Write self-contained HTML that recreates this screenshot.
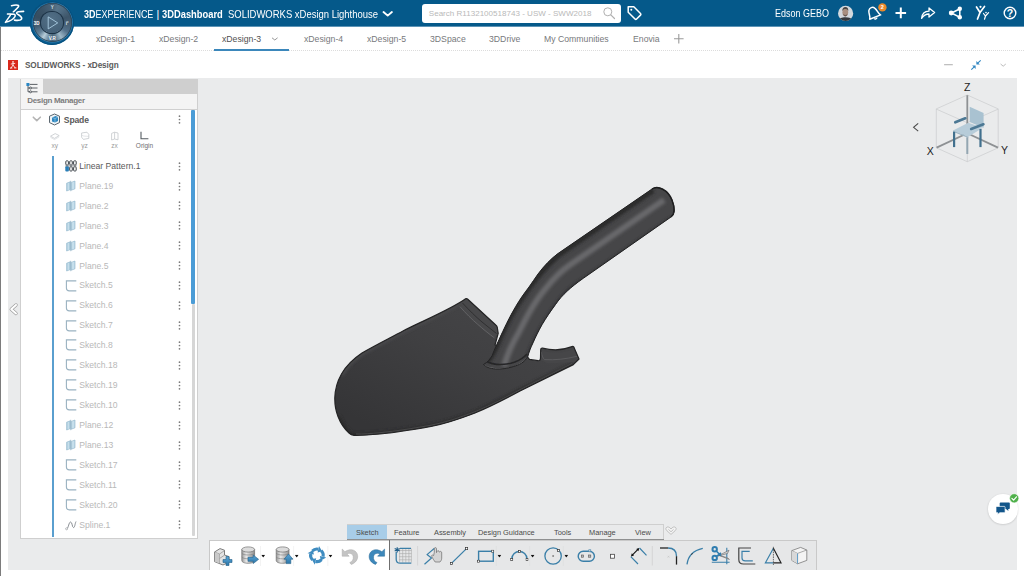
<!DOCTYPE html>
<html>
<head>
<meta charset="utf-8">
<title>3DEXPERIENCE | 3DDashboard</title>
<style>
*{box-sizing:border-box;margin:0;padding:0}
html,body{width:1024px;height:576px;overflow:hidden;background:#fff;font-family:"Liberation Sans",sans-serif;}
body{position:relative}
.abs{position:absolute}
#topbar{left:0;top:0;width:1024px;height:27px;background:#05598a;border-bottom:1px solid #5d94b6}
#leftedge{left:0;top:27px;width:1px;height:549px;background:#7c7c7c}
#brand{left:84px;top:5.500px;height:16px;line-height:16px;font-size:10.500px;color:#fff;white-space:nowrap}
#brand span{transform-origin:0 50%;display:inline-block}
#brand b{font-weight:bold}
#search{left:422px;top:4px;width:199px;height:19px;background:#fff;border-radius:3px}
#search span{position:absolute;left:6.800px;top:2.500px;font-size:8.050px;line-height:13px;color:#b9b9b9;white-space:nowrap}
#user{left:774.700px;top:6.500px;font-size:10.300px;line-height:14px;color:#fff;white-space:nowrap;transform-origin:0 50%;transform:scaleX(0.874)}
#tabs{left:0;top:27px;width:1024px;height:24px;background:#fff}
.tab{position:absolute;top:32.500px;font-size:8.700px;line-height:12px;color:#77797c;white-space:nowrap}
.tab.act{color:#505050}
#tabline{left:0;top:50px;width:1024px;height:0;border-top:1px dotted #dcdcdc}
#actline{left:213.700px;top:49px;width:75.700px;height:2px;background:#3b87bb}
#hdr{left:25px;top:59.500px;font-size:8.200px;line-height:12px;color:#5b5b5b;font-weight:bold;white-space:nowrap;letter-spacing:-0.1px}
#swico{left:7.5px;top:60px;width:10px;height:10px;background:#d9291c}
#canvas{left:7.500px;top:78px;width:1009.500px;height:491.500px;background:#eaebec}
#panel{left:20px;top:78.500px;width:178px;height:460.500px;background:#fff;border:1px solid #cfcfcf}
#ptabbar{left:21px;top:79px;width:176px;height:14.700px;background:#cfcfcf}
#ptab{left:21px;top:79px;width:22px;height:15px;background:#f4f4f4}
#phead{left:21px;top:93.500px;width:176px;height:16.500px;background:#f4f4f4;border-bottom:1px solid #d0d0d0}
#phead span{position:absolute;left:6.200px;top:1.500px;font-size:8px;line-height:12px;font-weight:bold;color:#7c7c7c;white-space:nowrap;letter-spacing:-0.300px}
.row{position:absolute;left:79.300px;font-size:8.600px;line-height:12px;color:#b8b8b8;white-space:nowrap}
.pl{position:absolute;top:141px;text-align:center;font-size:6.500px;line-height:10px;color:#9a9a9a;white-space:nowrap}
.row.dk{color:#5a5a5a}
.dots{position:absolute;left:178px;width:2px;height:9px}
.dots i{position:absolute;left:0;width:2px;height:2px;background:#8c8c8c;border-radius:1px}
.dots i:nth-child(1){top:0}.dots i:nth-child(2){top:3.5px}.dots i:nth-child(3){top:7px}
#scroll{left:191.300px;top:110px;width:4px;height:194px;background:#4b9cd6;border-radius:1px}
#scrolltrack{left:192px;top:304px;width:3px;height:232px;background:#d6d6d6;border-radius:1px}
#treeline{left:51.800px;top:156px;width:2px;height:381px;background:#5a9fcf}
#tbtabs{left:346.500px;top:524px;width:317px;height:16px;background:#e9eaeb;border:1px solid #cfcfcf;border-bottom:none}
#tbact{left:347px;top:525px;width:40px;height:14.500px;background:#a8cde8}
#tbline{left:347px;top:539px;width:316.500px;height:1px;background:#8f9091}
#tbsep{left:389px;top:540px;width:1px;height:29.500px;background:#6f6f6f}
.tt{position:absolute;top:527.500px;font-size:7.400px;line-height:10px;color:#4a4a4a;white-space:nowrap}
#toolbar{left:209px;top:539.500px;width:607.500px;height:30px;background:#e6e7e8;border:1px solid #c9c9c9;border-bottom:none}
#tbwhite{left:210px;top:540.500px;width:179px;height:29px;background:#fff}
</style>
</head>
<body>
<div id="topbar" class="abs"></div>
<div id="brand" class="abs"><span id="b1s" style="position:absolute;left:0;top:0;transform:scaleX(0.855)"><b>3D</b>EXPERIENCE</span><span id="b2s" style="position:absolute;left:72.500px;top:0">|</span><span id="b3s" style="position:absolute;left:78px;top:0;transform:scaleX(0.890)"><b>3DDashboard</b></span><span id="b4s" style="position:absolute;left:143.500px;top:0;transform:scaleX(0.902)">SOLIDWORKS xDesign Lighthouse</span></div>
<svg class="abs" style="left:381px;top:9px" width="14" height="10" viewBox="0 0 14 10"><path d="M2.500,3 L6.700,6.600 L10.900,3" fill="none" stroke="#fff" stroke-width="1.900" stroke-linecap="round" stroke-linejoin="round"/></svg>
<div id="search" class="abs"><span>Search R1132100518743 - USW - SWW2018</span></div>
<div id="user" class="abs">Edson GEBO</div>
<div id="tabs" class="abs"></div>
<!-- search magnifier -->
<svg class="abs" style="left:601px;top:5px" width="18" height="18" viewBox="0 0 18 18"><circle cx="6.800" cy="6.800" r="4" fill="none" stroke="#b0b0b0" stroke-width="1"/><path d="M9.800,9.800 L13.500,13.500" stroke="#b0b0b0" stroke-width="1.200" stroke-linecap="round"/></svg>
<!-- tag icon -->
<svg class="abs" style="left:626px;top:4px" width="18" height="18" viewBox="0 0 18 18"><path d="M2.200,2.800 L7.800,2.800 L14.500,9.500 C15,10 15,10.600 14.500,11.100 L10.600,15 C10.100,15.500 9.500,15.500 9,15 L2.200,8.200 Z" fill="none" stroke="#fff" stroke-width="1.500" stroke-linejoin="round"/><circle cx="5.300" cy="5.800" r="1" fill="#fff"/></svg>
<!-- avatar -->
<svg class="abs" style="left:837px;top:5px" width="18" height="17" viewBox="837 5 18 17"><defs><clipPath id="avc"><circle cx="845.600" cy="13.400" r="7.600"/></clipPath></defs>
<circle cx="845.600" cy="13.400" r="7.600" fill="#d3d9de"/>
<g clip-path="url(#avc)"><path d="M838,22 C838.500,18.200 841.500,17.200 845.400,17.200 C849.500,17.200 852.600,18.400 853.400,22 Z" fill="#34383d"/>
<ellipse cx="845.300" cy="12.300" rx="2.900" ry="3.900" fill="#a98f80"/>
<path d="M842.300,11.200 C842.200,8.200 843.600,7 845.400,7 C847.300,7 848.500,8.300 848.300,11 C847.600,9.400 846.600,9 845.300,9 C844,9 843,9.600 842.300,11.200 Z" fill="#4a4643"/>
<path d="M843.300,13.800 C844.500,15.400 846.300,15.400 847.400,13.800 C847.300,15.600 846.400,16.600 845.300,16.600 C844.300,16.600 843.400,15.600 843.300,13.800 Z" fill="#6a5a52"/></g></svg>
<!-- bell -->
<svg class="abs" style="left:864px;top:3px" width="24" height="20" viewBox="864 3 24 20"><g transform="rotate(-22 873 13)"><path d="M867.600,17.600 C869.600,15.600 868.400,11.600 870.200,9 C871.800,6.800 875,6.800 876.400,9 C878.200,11.600 877.200,15.600 879.400,17.600 Z" fill="none" stroke="#fff" stroke-width="1.500" stroke-linejoin="round"/><path d="M872,18.600 C872.600,19.800 874.400,19.800 875,18.600" fill="none" stroke="#fff" stroke-width="1.300"/></g><circle cx="882.400" cy="7.400" r="4.200" fill="#e9892b"/><text x="882.400" y="9.300" font-family="Liberation Sans,sans-serif" font-size="5.500" font-weight="bold" fill="#fff" text-anchor="middle">2</text></svg>
<!-- plus -->
<svg class="abs" style="left:894px;top:6px" width="14" height="14" viewBox="0 0 14 14"><path d="M6.800,1.600 V12.200 M1.500,6.900 H12.100" stroke="#fff" stroke-width="2" stroke-linecap="butt"/></svg>
<!-- share arrow -->
<svg class="abs" style="left:919px;top:5px" width="18" height="16" viewBox="919 5 18 16"><path d="M921.600,18.400 C922,14 924.500,11.300 929,11.200 L929,8 L934.600,12.600 L929,17 L929,14 C926,14 923.500,15.400 921.600,18.400 Z" fill="none" stroke="#fff" stroke-width="1.300" stroke-linejoin="round"/></svg>
<!-- network -->
<svg class="abs" style="left:946px;top:4px" width="20" height="18" viewBox="946 4 20 18"><path d="M951.500,13 L959.500,9 M951.500,13 L959.500,17.200 M959.800,9 L959.800,17.200" stroke="#fff" stroke-width="1.500" fill="none"/><circle cx="951.200" cy="13" r="2.400" fill="#fff"/><circle cx="959.800" cy="8.800" r="2.200" fill="#fff"/><circle cx="959.800" cy="17.300" r="2.200" fill="#fff"/></svg>
<!-- Y people -->
<svg class="abs" style="left:973px;top:4px" width="20" height="18" viewBox="973 4 20 18"><g stroke="#fff" fill="none" stroke-linecap="round"><path d="M976.500,7 L980,12.500 L984.500,6.500 M980,12.500 L977.500,19" stroke-width="1.700"/><path d="M983.500,13.500 L985.500,16 L988.600,12.600 M985.500,16 L984.500,19.200" stroke-width="1.200"/></g><circle cx="980.500" cy="6.800" r="1.100" fill="#fff"/><circle cx="986" cy="12.600" r="0.800" fill="#fff"/></svg>
<!-- help -->
<svg class="abs" style="left:1001px;top:4px" width="18" height="18" viewBox="1001 4 18 18"><circle cx="1010" cy="13" r="5.800" fill="none" stroke="#fff" stroke-width="1.400"/><text x="1010" y="16.700" font-family="Liberation Sans,sans-serif" font-size="10.500" font-weight="bold" fill="#fff" text-anchor="middle">?</text></svg>
<!-- tab chevron + plus -->
<svg class="abs" style="left:269px;top:35px" width="12" height="8" viewBox="0 0 12 8"><path d="M3,2.800 L5.800,5 L8.600,2.800" fill="none" stroke="#8b8b8b" stroke-width="0.900"/></svg>
<svg class="abs" style="left:672px;top:32px" width="14" height="14" viewBox="0 0 14 14"><path d="M6.800,2 V11.600 M2,6.800 H11.600" stroke="#9a9a9a" stroke-width="1.100"/></svg>
<!-- header right icons -->
<svg class="abs" style="left:940px;top:56px" width="70" height="18" viewBox="940 56 70 18"><path d="M944.100,64.700 H952.800" stroke="#b4b4b4" stroke-width="1.100"/><g fill="#2f86c2"><path d="M976.400,64.500 V61 L979.900,64.500 Z"/><path d="M975.600,65.500 V69 L972.100,65.500 Z"/></g><path d="M978,62.900 L980.700,60.300 M974,67.100 L971.300,69.700" stroke="#2f86c2" stroke-width="1.100"/><path d="M1000.600,64 L1003.200,66.200 L1005.800,64" fill="none" stroke="#b4b4b4" stroke-width="0.900"/></svg>


<div id="tabline" class="abs"></div>
<div id="actline" class="abs"></div>
<div class="tab" style="left:96px">xDesign-1</div>
<div class="tab" style="left:159px">xDesign-2</div>
<div class="tab act" style="left:222px">xDesign-3</div>
<div class="tab" style="left:304px">xDesign-4</div>
<div class="tab" style="left:367px">xDesign-5</div>
<div class="tab" style="left:430px">3DSpace</div>
<div class="tab" style="left:489px">3DDrive</div>
<div class="tab" style="left:544px">My Communities</div>
<div class="tab" style="left:633px">Enovia</div>
<div id="leftedge" class="abs"></div>
<!-- 3DS logo -->
<svg class="abs" style="left:3px;top:3px" width="24" height="22" viewBox="3 3 24 22">
<g fill="none" stroke="#fff" stroke-linecap="round" stroke-linejoin="round">
<path d="M11.500,5.700 C13.600,5.200 16,5 17.700,5.200 C18.800,5.400 19,6 18.400,6.800 C17.400,8.200 16.300,9.300 15.200,10.200 C14.600,10.800 13.900,11.400 13.300,11.800" stroke-width="1.500"/>
<path d="M7.500,14.100 C9.800,13.800 12.300,13.800 14,14.300 C15.300,14.700 15.500,15.600 14.900,16.600 C13.400,19.200 9.800,21.200 5.400,22.400 L10.300,15.400" stroke-width="1.500"/>
<path d="M23.600,11.400 C21.600,11.400 19.600,11.500 18.300,11.800 C16.900,12.200 16.300,12.700 16.700,13.400 C17.500,14.600 21.300,15.800 21.700,18 C21.900,19.300 20.500,20.100 18.700,20.300 C17.300,20.400 15.800,20.300 14.600,20.100" stroke-width="1.600"/>
</g></svg>
<!-- compass -->
<div class="abs" id="compass" style="left:30px;top:0.500px;width:44px;height:44px;border-radius:50%;background:#0a5c8f;box-shadow:inset 0 0 0 1px #05507e"></div>
<div class="abs" style="left:32.500px;top:2.800px;width:39.600px;height:39.600px;border-radius:50%;background:conic-gradient(from 0deg,#4a6378 0deg,#587489 18deg,#4e6a80 40deg,#3d5569 70deg,#465f74 95deg,#52708a 122deg,#9db7c7 150deg,#5d7b90 168deg,#4b677c 180deg,#6a889c 194deg,#b7cdd9 212deg,#66849a 230deg,#435d72 256deg,#364d60 290deg,#3a5266 320deg,#445d72 345deg,#4a6378 360deg);box-shadow:inset 0 0 0 0.800px #2b475c, 0 0 0 0.600px #3f86b4"></div>
<div class="abs" style="left:41.300px;top:11.800px;width:21.600px;height:21.600px;border-radius:50%;background:radial-gradient(circle at 45% 35%,#526f86,#435f76 85%);box-shadow:0 0 0 1.100px #1c3347"></div>
<svg class="abs" style="left:30px;top:0" width="44" height="45" viewBox="30 0 44 45">
<path d="M48.200,16.900 L48.200,28.900 L57.700,22.900 Z" fill="none" stroke="#a9cce2" stroke-width="0.900" stroke-linejoin="round"/>
<text x="36.600" y="25" font-family="Liberation Sans,sans-serif" font-size="4.500" font-weight="bold" fill="#fff" text-anchor="middle">3D</text>
<text x="52.300" y="9.300" font-family="Liberation Sans,sans-serif" font-size="4.500" font-weight="bold" fill="#d5e3ec" text-anchor="middle">Y</text>
<text x="67" y="24.500" font-family="Liberation Sans,sans-serif" font-size="4.500" font-weight="bold" fill="#e6eef3" text-anchor="middle">i²</text>
<text x="52.300" y="39.800" font-family="Liberation Sans,sans-serif" font-size="4.500" font-weight="bold" fill="#fff" text-anchor="middle">V.R</text>
</svg>

<div id="swico" class="abs"></div><svg class="abs" style="left:7.500px;top:60px" width="10" height="10" viewBox="0 0 10 10"><g stroke="#fff" stroke-width="0.800" fill="none" stroke-linecap="round"><path d="M5,2.200 L5,5.200 M3.200,4 L6.800,3.400 M5,5.200 L3,8 M5,5.200 L7.200,7.800 M2.400,8 H4 M6.400,7.900 H8"/></g><circle cx="5" cy="1.800" r="0.700" fill="#fff"/></svg>
<div id="hdr" class="abs">SOLIDWORKS - xDesign</div>
<div id="canvas" class="abs"></div>

<svg id="spade" class="abs" style="left:0;top:0" width="1024" height="576" viewBox="0 0 1024 576">
<defs>
<linearGradient id="bladeG" x1="470" y1="300" x2="400" y2="440" gradientUnits="userSpaceOnUse">
<stop offset="0" stop-color="#444446"/><stop offset="0.35" stop-color="#404042"/><stop offset="0.7" stop-color="#3a3a3c"/><stop offset="1" stop-color="#353537"/>
</linearGradient>
<filter id="b1" x="-20%" y="-20%" width="140%" height="140%"><feGaussianBlur stdDeviation="1.6"/></filter>
<filter id="b2" x="-20%" y="-20%" width="140%" height="140%"><feGaussianBlur stdDeviation="0.7"/></filter>
<clipPath id="handleClip"><path id="hp" d="M483.500,364.500 C488,362 490,359 492.200,355.600 C495,348 497,344 498.900,340 C501.500,334 504,329 506.700,323.300 C509.500,317.500 512.500,312 515.600,306.700 C519.500,300 524,293.500 529,287 C532,283 535,278 538,274 C544,266 551,258.500 558.300,253.300 L652,189 C658,185 668,190 672,200 C675,208 675,214 671,217 L583.300,278.300 C571,287 562,295 555.600,304.400 C550,312 546,318 542.200,324.400 C538.500,331 535.500,337 533.300,342.200 C530.500,348 529,352 527.800,356.500 C524,363 519,365 513.300,366.600 C507,368.500 501,369.300 495.600,369 C490,368.500 485.500,367 483.500,364.500 Z"/></clipPath>
<clipPath id="bladeClip"><path id="bp" d="M465.600,298.800 C450,310 420,322 403,331 C388,339 374,346 362,353 C353,359 346,366 341.500,374 C337.500,381 335,390 334.800,398 C334.700,405 336,411.500 338,416.500 C340.500,423 344.500,429 349,433 C350.500,434.500 352,435.200 354,435.300 C362,435.600 371,434.800 380,434 C396,432.500 414,429.500 431,426.500 C447,423.500 462,418 475,413 C492,406 505,399 520,391 L573.300,364.600 L579,359 L574,347.500 C573.800,346.400 573,346.300 572,346.600 C566,348.900 561,349.800 555.600,349.800 C551,349.800 547,349.300 542.500,348.200 C541.300,348 540.800,348.600 540.700,349.800 L540.500,358 C540.500,360 539.600,360.900 538,360.700 L529.500,359.400 L527,356.500 L495,345 L498.200,333.300 L497.300,327.500 C497.200,326.500 496.800,325.800 496,325.200 L467.500,299 C466.800,298.400 466.200,298.400 465.600,298.800 Z"/></clipPath>
</defs>
<!-- blade -->
<use href="#bp" fill="url(#bladeG)"/>
<g clip-path="url(#bladeClip)">
<path d="M465,300 C450,311 420,323 403,332 C388,340 374,347 362,354 C353,360 346,367 342,375" fill="none" stroke="#4c4c4e" stroke-width="3" filter="url(#b1)"/>
<path d="M338,416.500 C340.500,423 344.500,429 349,433 C350.500,434.500 352,435.200 354,435.300 C362,435.600 371,434.800 380,434 C396,432.500 414,429.500 431,426.500 C447,423.500 462,418 475,413 C492,406 505,399 520,391 L573,365" fill="none" stroke="#2a2a2c" stroke-width="5" filter="url(#b1)"/>

</g>
<!-- left flange face -->
<path d="M465.600,298.800 L460,306.700 C466,313.500 472,319.500 477.800,324.400 C483,329 489,334 494.400,337.800 L498.200,333.300 L497.300,327.500 L496,325.200 L467.500,299 Z" fill="#48484a"/>
<path d="M460,306.700 C466,313.500 472,319.500 477.800,324.400 C483,329 489,334 494.400,337.800" fill="none" stroke="#6a6a6c" stroke-width="0.800"/>
<path d="M462.500,303 C469,310 476,317 482,322 C487,326 492,330 496.500,333.500" fill="none" stroke="#2c2c2e" stroke-width="0.900"/>
<!-- right flange face -->
<path d="M540.700,350 C545,351.800 550,352.600 555.600,352.600 C562,352.600 568,351.500 574.500,349 L579,359 L575,362 L548,363.500 L540.500,360 Z" fill="#464648"/>
<path d="M541.300,352 C542,356 543,358.400 544.500,359.600 C555,360.300 566,359 577,356.300" fill="none" stroke="#606062" stroke-width="0.800"/>
<use href="#bp" fill="none" stroke="#242425" stroke-width="1.200" stroke-linejoin="round"/>
<path d="M356,434 C363,434.300 371,433.500 380,432.700 C396,431.200 414,428.200 431,425.200 C447,422.200 462,416.700 475,411.700 C492,404.700 505,397.700 520,389.700 L572,363.500" fill="none" stroke="#505052" stroke-width="0.800"/>
<!-- handle + socket -->
<use href="#hp" fill="#464648"/>
<g clip-path="url(#handleClip)">
<path d="M504,366 C508,352 513,342 518.500,333 C522,326 525,320 529,313 C534,304 540,295 546.500,287.500 C554,278 561,271 570.500,264.500 L664,200" fill="none" stroke="#68686b" stroke-width="6" filter="url(#b1)"/>
<path d="M487,362 C492,356 496,347 499,340 C503,330 510,316 517,305 C526,291 540,271 558,255 L653,190" fill="none" stroke="#2a2a2c" stroke-width="6" filter="url(#b1)"/>
<path d="M528,360 C532,346 540,330 556.500,306 C564,295 574,286 584,280.500 L672,219" fill="none" stroke="#2c2c2e" stroke-width="5" filter="url(#b1)"/>
<path d="M484,365.500 C492,370 506,369.500 515,366.500 C521,364.500 525,361 528,357" fill="none" stroke="#707072" stroke-width="1.300" filter="url(#b2)"/>
<path d="M486,361 C494,366 507,365 515,362 C520,360 524,357.500 527,354" fill="none" stroke="#262628" stroke-width="1.600" filter="url(#b2)"/>
</g>
<use href="#hp" fill="none" stroke="#232324" stroke-width="1"/>
<path d="M652,189 C658,185 668,190 672,200 C675,208 675,214 671,217" fill="none" stroke="#1e1e1f" stroke-width="1.500"/>
</svg>

<svg class="abs" style="left:904px;top:78px" width="113" height="92" viewBox="904 78 113 92">
<g fill="none" stroke="#c4c6c8" stroke-width="0.600">
<path d="M967.300,95 L936.300,108.900 L936.300,147.800 L967.300,161.700 L998.200,147.800 L998.200,108.900 Z"/>
<path d="M936.300,109.100 L967.300,122.800 L998.200,109.100 M967.300,122.800 V161.600"/>
</g>
<g stroke="#8e9194" stroke-width="1.800" fill="none" stroke-linecap="butt">
<path d="M967.300,95.200 V133.200"/><path d="M936.600,147.600 L967.300,133.200"/><path d="M998,147.600 L967.300,133.200"/>
</g>
<!-- chair back -->
<path d="M969.700,106.800 L983.600,113.100 L983.600,127.700 L969.700,122.100 Z" fill="#a9c2d1"/>
<!-- seat -->
<path d="M953,130.400 L968.300,122.800 L982.900,127.700 L968.300,136.700 Z" fill="#b7ccd9"/>
<path d="M953,130.400 L968.300,136.700 L968.300,138 L953,131.700 Z" fill="#9bb4c4"/>
<!-- legs -->
<path d="M954.100,131.800 V147.100" stroke="#41708e" stroke-width="2.200"/>
<path d="M980.500,129 V147.100" stroke="#41708e" stroke-width="2.200"/>
<path d="M967.300,137.400 V154" stroke="#94a6b2" stroke-width="2"/>
<!-- arms -->
<path d="M955.300,122.300 L965.300,118.300" stroke="#4c7894" stroke-width="2.700" stroke-linecap="round"/>
<path d="M971.200,128.900 L983.400,124.300" stroke="#4c7894" stroke-width="2.700" stroke-linecap="round"/>
<g font-family="Liberation Sans,sans-serif" font-size="10.500" fill="#1c1c1c" text-anchor="middle">
<text x="967.300" y="91.200">Z</text><text x="930.300" y="154.600">X</text><text x="1004.600" y="154.200">Y</text>
</g>
<path d="M918.200,123.400 L913.600,127.300 L918.200,131.200" fill="none" stroke="#4a4a4a" stroke-width="1.100"/>
</svg>
<!-- chat bubble -->
<div class="abs" style="left:988px;top:494px;width:29.500px;height:29.500px;border-radius:50%;background:#fff;box-shadow:0 0.500px 2px rgba(0,0,0,0.180)"></div>
<svg class="abs" style="left:986px;top:490px" width="36" height="36" viewBox="986 490 36 36">
<path d="M1000.500,502.400 H1009 C1009.500,502.400 1009.800,502.700 1009.800,503.200 V508.300 C1009.800,508.800 1009.500,509.100 1009,509.100 H1008.200 L1008.400,511 L1006,509.100 H1000.500 C1000,509.100 999.700,508.800 999.700,508.300 V503.200 C999.700,502.700 1000,502.400 1000.500,502.400 Z" fill="#12558a"/>
<path d="M996.800,506.400 H1004.300 C1004.800,506.400 1005.100,506.700 1005.100,507.200 V511.900 C1005.100,512.400 1004.800,512.700 1004.300,512.700 H999.800 L997.600,514.600 L997.800,512.700 H996.800 C996.300,512.700 996,512.400 996,511.900 V507.200 C996,506.700 996.300,506.400 996.800,506.400 Z" fill="#12558a" stroke="#fff" stroke-width="0.700"/>
<circle cx="1014.200" cy="498.300" r="4.600" fill="#4fb04a" stroke="#fff" stroke-width="0.600"/>
<path d="M1011.900,498.400 L1013.600,500.100 L1016.500,496.800" fill="none" stroke="#fff" stroke-width="1.200" stroke-linecap="round" stroke-linejoin="round"/>
</svg>
<div id="panel" class="abs"></div>
<div id="ptabbar" class="abs"></div>
<div id="ptab" class="abs"></div>
<div id="phead" class="abs"><span>Design Manager</span></div>
<div id="treeline" class="abs"></div>
<div id="scrolltrack" class="abs"></div>
<div id="scroll" class="abs"></div>
<svg width="0" height="0" style="position:absolute"><defs>
<symbol id="i-pl" viewBox="0 0 12 12"><path d="M1.600,3.200 L5.200,1.800 L5.200,9.600 L1.600,11 Z" fill="#b4d3e3" stroke="#8db4ca" stroke-width="0.600"/><path d="M6.200,2.400 L10,1 L10,8.800 L6.200,10.200 Z" fill="#bfdbe9" stroke="#8db4ca" stroke-width="0.600"/><path d="M5.700,0.800 V11.200" stroke="#86acc2" stroke-width="0.700"/><path d="M3.400,3 V10 M8.100,2 V9.200" stroke="#d6e8f1" stroke-width="0.600"/></symbol>
<symbol id="i-sk" viewBox="0 0 12 12"><path d="M11.300,0.900 H1.400 V8 C1.400,10 2.500,10.900 4.300,10.900 H11.300" fill="none" stroke="#9ab2c1" stroke-width="1.100"/></symbol>
<symbol id="i-sp" viewBox="0 0 12 12"><path d="M2,9.500 C3.500,9 3.800,3 5.600,3 C7.400,3 7,8.600 8.600,8.600 C9.800,8.600 10,4.500 11,2.500" fill="none" stroke="#8a8f94" stroke-width="1"/><circle cx="1.600" cy="9.800" r="1" fill="#fff" stroke="#8a8f94" stroke-width="0.600"/></symbol>
<symbol id="i-lp" viewBox="0 0 12 12"><g fill="#fff" stroke="#3c4349" stroke-width="1"><rect x="0.800" y="0.800" width="2.600" height="4.200" rx="0.900"/><rect x="4.700" y="0.800" width="2.600" height="4.200" rx="0.900"/><rect x="8.600" y="0.800" width="2.600" height="4.200" rx="0.900"/><rect x="4.700" y="6.800" width="2.600" height="4.200" rx="0.900"/><rect x="8.600" y="6.800" width="2.600" height="4.200" rx="0.900"/></g><rect x="0.300" y="6.300" width="3.600" height="5.200" rx="1" fill="#2a7fb8"/><path d="M0.300,5.900 H11.700" stroke="#3c4349" stroke-width="0.600"/></symbol>
<symbol id="i-dots" viewBox="0 0 3 9"><circle cx="1.500" cy="1.200" r="0.850" fill="#7a7a7a"/><circle cx="1.500" cy="4.500" r="0.850" fill="#7a7a7a"/><circle cx="1.500" cy="7.800" r="0.850" fill="#7a7a7a"/></symbol>
</defs></svg>
<svg class="abs" style="left:64.500px;top:160.10px" width="12" height="12"><use href="#i-lp"/></svg><div class="row dk" style="top:159.90px">Linear Pattern.1</div><svg class="abs" style="left:177.800px;top:161.60px" width="3" height="9"><use href="#i-dots"/></svg>
<svg class="abs" style="left:64.500px;top:180.03px" width="12" height="12"><use href="#i-pl"/></svg><div class="row" style="top:179.83px">Plane.19</div><svg class="abs" style="left:177.800px;top:181.53px" width="3" height="9"><use href="#i-dots"/></svg>
<svg class="abs" style="left:64.500px;top:199.96px" width="12" height="12"><use href="#i-pl"/></svg><div class="row" style="top:199.76px">Plane.2</div><svg class="abs" style="left:177.800px;top:201.46px" width="3" height="9"><use href="#i-dots"/></svg>
<svg class="abs" style="left:64.500px;top:219.89px" width="12" height="12"><use href="#i-pl"/></svg><div class="row" style="top:219.69px">Plane.3</div><svg class="abs" style="left:177.800px;top:221.39px" width="3" height="9"><use href="#i-dots"/></svg>
<svg class="abs" style="left:64.500px;top:239.82px" width="12" height="12"><use href="#i-pl"/></svg><div class="row" style="top:239.62px">Plane.4</div><svg class="abs" style="left:177.800px;top:241.32px" width="3" height="9"><use href="#i-dots"/></svg>
<svg class="abs" style="left:64.500px;top:259.75px" width="12" height="12"><use href="#i-pl"/></svg><div class="row" style="top:259.55px">Plane.5</div><svg class="abs" style="left:177.800px;top:261.25px" width="3" height="9"><use href="#i-dots"/></svg>
<svg class="abs" style="left:64.500px;top:279.68px" width="12" height="12"><use href="#i-sk"/></svg><div class="row" style="top:279.48px">Sketch.5</div><svg class="abs" style="left:177.800px;top:281.18px" width="3" height="9"><use href="#i-dots"/></svg>
<svg class="abs" style="left:64.500px;top:299.61px" width="12" height="12"><use href="#i-sk"/></svg><div class="row" style="top:299.41px">Sketch.6</div><svg class="abs" style="left:177.800px;top:301.11px" width="3" height="9"><use href="#i-dots"/></svg>
<svg class="abs" style="left:64.500px;top:319.54px" width="12" height="12"><use href="#i-sk"/></svg><div class="row" style="top:319.34px">Sketch.7</div><svg class="abs" style="left:177.800px;top:321.04px" width="3" height="9"><use href="#i-dots"/></svg>
<svg class="abs" style="left:64.500px;top:339.47px" width="12" height="12"><use href="#i-sk"/></svg><div class="row" style="top:339.27px">Sketch.8</div><svg class="abs" style="left:177.800px;top:340.97px" width="3" height="9"><use href="#i-dots"/></svg>
<svg class="abs" style="left:64.500px;top:359.40px" width="12" height="12"><use href="#i-sk"/></svg><div class="row" style="top:359.20px">Sketch.18</div><svg class="abs" style="left:177.800px;top:360.90px" width="3" height="9"><use href="#i-dots"/></svg>
<svg class="abs" style="left:64.500px;top:379.33px" width="12" height="12"><use href="#i-sk"/></svg><div class="row" style="top:379.13px">Sketch.19</div><svg class="abs" style="left:177.800px;top:380.83px" width="3" height="9"><use href="#i-dots"/></svg>
<svg class="abs" style="left:64.500px;top:399.26px" width="12" height="12"><use href="#i-sk"/></svg><div class="row" style="top:399.06px">Sketch.10</div><svg class="abs" style="left:177.800px;top:400.76px" width="3" height="9"><use href="#i-dots"/></svg>
<svg class="abs" style="left:64.500px;top:419.19px" width="12" height="12"><use href="#i-pl"/></svg><div class="row" style="top:418.99px">Plane.12</div><svg class="abs" style="left:177.800px;top:420.69px" width="3" height="9"><use href="#i-dots"/></svg>
<svg class="abs" style="left:64.500px;top:439.12px" width="12" height="12"><use href="#i-pl"/></svg><div class="row" style="top:438.92px">Plane.13</div><svg class="abs" style="left:177.800px;top:440.62px" width="3" height="9"><use href="#i-dots"/></svg>
<svg class="abs" style="left:64.500px;top:459.05px" width="12" height="12"><use href="#i-sk"/></svg><div class="row" style="top:458.85px">Sketch.17</div><svg class="abs" style="left:177.800px;top:460.55px" width="3" height="9"><use href="#i-dots"/></svg>
<svg class="abs" style="left:64.500px;top:478.98px" width="12" height="12"><use href="#i-sk"/></svg><div class="row" style="top:478.78px">Sketch.11</div><svg class="abs" style="left:177.800px;top:480.48px" width="3" height="9"><use href="#i-dots"/></svg>
<svg class="abs" style="left:64.500px;top:498.91px" width="12" height="12"><use href="#i-sk"/></svg><div class="row" style="top:498.71px">Sketch.20</div><svg class="abs" style="left:177.800px;top:500.41px" width="3" height="9"><use href="#i-dots"/></svg>
<svg class="abs" style="left:64.500px;top:518.84px" width="12" height="12"><use href="#i-sp"/></svg><div class="row" style="top:518.64px">Spline.1</div><svg class="abs" style="left:177.800px;top:520.34px" width="3" height="9"><use href="#i-dots"/></svg>
<svg class="abs" style="left:31px;top:114px" width="12" height="10" viewBox="0 0 12 10"><path d="M2.300,3.200 L5.800,6.600 L9.300,3.200" fill="none" stroke="#b4b4b4" stroke-width="1.600" stroke-linecap="round" stroke-linejoin="round"/></svg>
<svg class="abs" style="left:48px;top:113px" width="13" height="13" viewBox="0 0 13 13"><path d="M6.500,1 L11.500,3.200 L11.500,9.600 L6.500,12 L1.500,9.600 L1.500,3.200 Z" fill="#eef3f6" stroke="#4a5660" stroke-width="0.900" stroke-linejoin="round"/><path d="M4,4.400 L7.600,3 L10,4 L10,8 L7,9.600 L4,8.400 Z" fill="#2d86c0"/><path d="M4,4.400 L7,5.600 L10,4 M7,5.600 V9.600" stroke="#bfe0f2" stroke-width="0.500" fill="none"/></svg>
<div class="row dk" style="left:63.800px;top:113.500px;font-weight:bold;font-size:8.600px;letter-spacing:-0.150px">Spade</div>
<svg class="abs" style="left:177.800px;top:115px" width="3" height="9"><use href="#i-dots"/></svg>
<svg class="abs" style="left:49px;top:130px" width="12" height="12" viewBox="0 0 12 12"><path d="M1.500,6.200 L6.200,3.600 L10.200,5.600 L5.500,8.400 Z" fill="none" stroke="#c4c8cc" stroke-width="0.800"/><path d="M1.500,7.400 L5.500,9.600 L10.200,6.800" fill="none" stroke="#d0d3d6" stroke-width="0.600"/></svg>
<svg class="abs" style="left:78.500px;top:130px" width="12" height="12" viewBox="0 0 12 12"><path d="M2.600,3 L8,2.200 L9.800,4.400 L9.800,8.400 L4.400,9.400 L2.600,7.200 Z" fill="none" stroke="#c4c8cc" stroke-width="0.800"/><path d="M2.600,5.200 C5,6.600 7,6 9.800,6.400" fill="none" stroke="#d0d3d6" stroke-width="0.600"/></svg>
<svg class="abs" style="left:108.500px;top:130px" width="12" height="12" viewBox="0 0 12 12"><path d="M2.600,3.400 L5.600,2.200 L5.600,9 L2.600,10 Z M5.600,2.200 L9,3 L9,9.800 L5.600,9" fill="none" stroke="#c4c8cc" stroke-width="0.800"/></svg>
<svg class="abs" style="left:138px;top:130px" width="12" height="12" viewBox="0 0 12 12"><path d="M3,1.800 V8.800 H10.400" fill="none" stroke="#555b61" stroke-width="1.100"/></svg>
<div class="pl" style="left:44.800px;width:20px">xy</div><div class="pl" style="left:74.500px;width:20px">yz</div><div class="pl" style="left:104.500px;width:20px">zx</div><div class="pl" style="left:129.500px;width:30px;color:#6e6e6e">Origin</div>
<svg class="abs" style="left:7px;top:300px" width="14" height="18" viewBox="7 300 14 18"><path d="M16,304.900 L11.200,309.200 L16,313.500" fill="none" stroke="#9a9a9a" stroke-width="3.300" stroke-linejoin="round" stroke-linecap="round"/><path d="M16,304.900 L11.200,309.200 L16,313.500" fill="none" stroke="#fff" stroke-width="2" stroke-linejoin="round" stroke-linecap="round"/></svg>
<svg class="abs" style="left:25px;top:81.500px" width="16" height="13" viewBox="0 0 16 13"><g stroke="#4a4f55" stroke-width="0.900" fill="none"><path d="M4.500,2.400 H12.500 M6.800,6 H12.500 M6.800,9.800 H12.500"/><path d="M3,4 V9.800 H5 M3,6 H5"/><circle cx="5.600" cy="6" r="1"/><circle cx="5.600" cy="9.800" r="1"/></g><rect x="1.400" y="1" width="3" height="3" fill="#2a86c4"/></svg>

<div id="toolbar" class="abs"></div>
<div id="tbwhite" class="abs"></div>
<div id="tbtabs" class="abs"></div>
<div id="tbact" class="abs"></div><div id="tbline" class="abs"></div><div id="tbsep" class="abs"></div>

<svg class="abs" style="left:200px;top:520px" width="640" height="56" viewBox="200 520 640 56">
<defs>
<linearGradient id="gCyl" x1="0" y1="0" x2="1" y2="0"><stop offset="0" stop-color="#9a9a9a"/><stop offset="0.35" stop-color="#e8e8e8"/><stop offset="1" stop-color="#8e8e8e"/></linearGradient>
<linearGradient id="gBlue" x1="0" y1="0" x2="0" y2="1"><stop offset="0" stop-color="#5aa5d6"/><stop offset="1" stop-color="#2d76a8"/></linearGradient>
<symbol id="dd" viewBox="0 0 4 3"><path d="M0,0 H4 L2,2.600 Z" fill="#111"/></symbol>
<symbol id="sq" viewBox="0 0 3 3"><rect x="0.400" y="0.400" width="2.200" height="2.200" fill="#fff" stroke="#333" stroke-width="0.700"/></symbol>
</defs>
<!-- 1 new part -->
<g>
<path d="M214.500,552 L220,548.600 L224.500,550.200 L224.500,555 L229,556.600 L229,562 L223,565 L214.500,561.600 Z" fill="#e3e3e3" stroke="#6f6f6f" stroke-width="0.900" stroke-linejoin="round"/>
<path d="M214.500,552 L219.500,554 L219.500,563.600 M219.500,554 L224.500,550.600 M219.500,558.500 L224.500,555.200" fill="none" stroke="#8a8a8a" stroke-width="0.700"/>
<path d="M214.800,552.300 L219.300,554.200 L219.300,563.300 L214.800,561.400 Z" fill="#c9c9c9"/>
<path d="M226,559.500 h-3 v3 h3 v3 h3 v-3 h3 v-3 h-3 v-3 h-3 Z" fill="url(#gBlue)" stroke="#245f88" stroke-width="0.600" stroke-linejoin="round"/>
</g>
<!-- 2 db arrow right -->
<g>
<path d="M241.800,549.500 V560.500 C241.800,562.200 244.600,563.300 248.200,563.300 C251.800,563.300 254.600,562.200 254.600,560.500 V549.500 Z" fill="url(#gCyl)" stroke="#707070" stroke-width="0.700"/>
<ellipse cx="248.200" cy="549.500" rx="6.400" ry="2.600" fill="#dcdcdc" stroke="#707070" stroke-width="0.700"/>
<path d="M241.800,553.200 C243,555.600 253.400,555.600 254.600,553.200 M241.800,557 C243,559.400 253.400,559.400 254.600,557" fill="none" stroke="#7a7a7a" stroke-width="0.600"/>
<path d="M248,557.300 H253.200 V555 L258.600,559.300 L253.200,563.600 V561.300 H248 Z" fill="url(#gBlue)" stroke="#245f88" stroke-width="0.600" stroke-linejoin="round"/>
<use href="#dd" x="261.200" y="554.800" width="4" height="3"/>
</g>
<!-- 3 db arrow up -->
<g>
<path d="M276.200,549.500 V560.500 C276.200,562.200 279,563.300 282.600,563.300 C286.200,563.300 289,562.200 289,560.500 V549.500 Z" fill="url(#gCyl)" stroke="#707070" stroke-width="0.700"/>
<ellipse cx="282.600" cy="549.500" rx="6.400" ry="2.600" fill="#dcdcdc" stroke="#707070" stroke-width="0.700"/>
<path d="M276.200,553.200 C277.400,555.600 287.800,555.600 289,553.200 M276.200,557 C277.400,559.400 287.800,559.400 289,557" fill="none" stroke="#7a7a7a" stroke-width="0.600"/>
<path d="M286.200,563.600 V559.200 H284 L288.500,554 L293,559.200 H290.800 V563.600 Z" fill="url(#gBlue)" stroke="#245f88" stroke-width="0.600" stroke-linejoin="round"/>
<use href="#dd" x="294.700" y="554.800" width="4" height="3"/>
</g>
<!-- 4 refresh -->
<g transform="translate(316.900,555.300)"><g transform="rotate(-12)"><path d="M-3.610,-5.160 A6.300,6.300 0 0 1 2.660,-5.710" fill="none" stroke="#3f8cc0" stroke-width="3.100"/><path d="M1.300,-2.700 L4,-8.700 L5.900,-2.900 Z" fill="#3f8cc0"/></g><g transform="rotate(78)"><path d="M-3.610,-5.160 A6.300,6.300 0 0 1 2.660,-5.710" fill="none" stroke="#3f8cc0" stroke-width="3.100"/><path d="M1.300,-2.700 L4,-8.700 L5.900,-2.900 Z" fill="#3f8cc0"/></g><g transform="rotate(168)"><path d="M-3.610,-5.160 A6.300,6.300 0 0 1 2.660,-5.710" fill="none" stroke="#3f8cc0" stroke-width="3.100"/><path d="M1.300,-2.700 L4,-8.700 L5.900,-2.900 Z" fill="#3f8cc0"/></g><g transform="rotate(258)"><path d="M-3.610,-5.160 A6.300,6.300 0 0 1 2.660,-5.710" fill="none" stroke="#3f8cc0" stroke-width="3.100"/><path d="M1.300,-2.700 L4,-8.700 L5.900,-2.900 Z" fill="#3f8cc0"/></g></g>
<use href="#dd" x="328.500" y="554.800" width="4" height="3"/>
<!-- 5 undo -->
<path d="M342.200,549 L342.200,556.200 L349.200,556.200 L346.900,553.900 C349.500,552.600 352.600,553.600 353.200,556.400 C353.800,559.200 352.200,561.600 349.800,562.600 L351.200,564.400 C355.400,563 358.200,559.600 357.600,555.400 C356.900,550.400 351,547.600 344.900,551.700 Z" fill="#c4c4c4" stroke="#a8a8a8" stroke-width="0.500" stroke-linejoin="round"/>
<!-- 6 redo -->
<path d="M342.200,549 L342.200,556.200 L349.200,556.200 L346.900,553.900 C349.500,552.600 352.600,553.600 353.200,556.400 C353.800,559.200 352.200,561.600 349.800,562.600 L351.200,564.400 C355.400,563 358.200,559.600 357.600,555.400 C356.900,550.400 351,547.600 344.900,551.700 Z" transform="translate(726.800,0) scale(-1,1)" fill="#3d88bb" stroke="#2a6a96" stroke-width="0.500" stroke-linejoin="round"/>
<!-- 7 grid -->
<g>
<path d="M399,550.500 H411.500 M399,553.600 H411.500 M399,556.700 H411.500 M399,559.800 H411.500 M399.600,548.600 V562.500 M402.700,548.600 V562.500 M405.800,548.600 V562.500 M408.900,548.600 V562.500 M411.400,548.600 V562.500" stroke="#a9a9a9" stroke-width="0.600" fill="none"/>
<path d="M400,548.300 H411 M396.200,552 V559.200 C396.200,561.600 397.800,563.200 400.200,563.200 H411.300" fill="none" stroke="#3a7fa8" stroke-width="1.300"/>
<path d="M397.200,547.200 V552.400 M394.700,548.500 L399.700,551.100 M394.700,551.100 L399.700,548.500" stroke="#1f5f8a" stroke-width="1.100"/>
</g>
<!-- 8 hand sketch -->
<g>
<path d="M424.500,564.200 L431.500,558 L427,554.600 L434.500,548.300" fill="none" stroke="#3a7fa8" stroke-width="1.200" stroke-linejoin="round"/>
<path d="M434.300,552.500 V548.800 C434.300,547.200 436.500,547.200 436.500,548.800 V552.600 L437,551.400 C437.600,550.200 439.300,550.600 439.200,552 L439.600,552 C440.200,550.900 441.800,551.400 441.700,552.800 V558.200 C441.700,560 440.800,561 440,562 H435.200 C434.200,560.600 432.400,558.200 431.800,556.400 C431.300,555 432.900,554.300 433.600,555.600 Z" fill="#d4d4d4" stroke="#6a6a6a" stroke-width="0.700" stroke-linejoin="round"/>
</g>
<!-- 9 line -->
<path d="M451.400,563.400 L466.500,548.600" stroke="#3a7fa8" stroke-width="1.300"/>
<use href="#sq" x="449.900" y="562" width="3" height="3"/><use href="#sq" x="465.100" y="547.100" width="3" height="3"/>
<!-- 10 rect -->
<rect x="478.600" y="551.300" width="14.700" height="9.900" fill="none" stroke="#3a7fa8" stroke-width="1.400"/>
<use href="#sq" x="477" y="559.700" width="3" height="3"/><use href="#sq" x="491.200" y="549.700" width="3" height="3"/>
<use href="#dd" x="497.400" y="554.800" width="4" height="3"/>
<!-- 11 arc -->
<path d="M511.800,559.300 C511.800,549 527,549 527,559.300" fill="none" stroke="#3a7fa8" stroke-width="1.500"/>
<use href="#sq" x="510.200" y="558" width="3" height="3"/><use href="#sq" x="525.500" y="558" width="3" height="3"/><use href="#sq" x="518" y="550" width="3" height="3"/>
<use href="#dd" x="530.600" y="554.800" width="4" height="3"/>
<!-- 12 circle -->
<circle cx="553.100" cy="556" r="8.200" fill="none" stroke="#3a7fa8" stroke-width="1.300"/>
<circle cx="553.100" cy="556" r="1" fill="#888"/>
<use href="#sq" x="557" y="549" width="3" height="3"/>
<use href="#dd" x="564.300" y="554.800" width="4" height="3"/>
<!-- 13 slot -->
<rect x="578.200" y="551.200" width="16.200" height="10" rx="5" fill="none" stroke="#3a7fa8" stroke-width="1.400"/>
<rect x="581.400" y="555" width="2.200" height="2.200" fill="#bbb" stroke="#555" stroke-width="0.600"/><rect x="588.600" y="555" width="2.200" height="2.200" fill="#bbb" stroke="#555" stroke-width="0.600"/>
<rect x="588.800" y="549.800" width="2" height="2" fill="#ddd" stroke="#3a7fa8" stroke-width="0.600"/>
<!-- 14 point -->
<rect x="610.600" y="554.300" width="3.900" height="3.900" fill="#fff" stroke="#444" stroke-width="0.800"/>
<!-- 15 dimension -->
<path d="M630.800,556.600 L638,564 M639.500,548 L646.500,555.300" stroke="#3a7fa8" stroke-width="1.200" fill="none"/>
<path d="M631.800,555.600 L638.400,548.900" stroke="#111" stroke-width="1.100"/>
<path d="M631,556.400 L631.800,553.300 L634,555.600 Z M639.200,548.100 L638.400,551.200 L636.200,548.900 Z" fill="#111"/>
<!-- 16 fillet -->
<path d="M660,548 H668" stroke="#222" stroke-width="1.300"/>
<path d="M668,548 C673.500,548 676.500,551 676.500,556.200" fill="none" stroke="#3a7fa8" stroke-width="1.300"/>
<path d="M676.500,556.200 V564.600" stroke="#222" stroke-width="1.300"/>
<path d="M667.600,555.800 L669.400,557.600 M669.400,555.800 L667.600,557.600" stroke="#bdbdbd" stroke-width="0.500"/>
<!-- 17 arc -->
<path d="M687,564.400 C688,556.500 693,550.500 702.800,548.400" fill="none" stroke="#3a7fa8" stroke-width="1.300"/>
<path d="M691,554.600 L693,553.400" stroke="#333" stroke-width="0.800"/>
<!-- 18 trim -->
<g>
<path d="M711.800,562.300 H729.600 M726.800,547.800 V564.300" stroke="#3a7fa8" stroke-width="1.100"/>
<path d="M718,556 L729,550.200 L727.500,553.500 Z M718,555 L729.400,559.400 L727,557.600 Z" fill="#d0d0d0" stroke="#666" stroke-width="0.600" stroke-linejoin="round"/>
<circle cx="714.700" cy="549.300" r="2.200" fill="none" stroke="#2f7db0" stroke-width="2"/>
<circle cx="714.700" cy="557.900" r="2.200" fill="none" stroke="#2f7db0" stroke-width="2"/>
<path d="M716.500,551.300 L721,555.800 M716.500,556.300 L721,553" stroke="#2f7db0" stroke-width="1.600"/>
</g>
<!-- 19 offset -->
<path d="M751,548 H738.800 V559.500 C738.800,562.300 740.600,564 743.400,564 H755.300" fill="none" stroke="#444" stroke-width="1.200"/>
<path d="M749.700,551.300 H742 V558 C742,559.800 743.200,560.800 745.200,560.800 H752.800" fill="none" stroke="#3a7fa8" stroke-width="1.200"/>
<!-- 20 mirror -->
<path d="M773.400,548.200 L765.400,562.800 H773.400" fill="none" stroke="#3a7fa8" stroke-width="1.200" stroke-linejoin="miter"/>
<path d="M773.400,548.200 L781,562.800 H773.400" fill="none" stroke="#222" stroke-width="1.200"/>
<path d="M773.400,546.800 V565" stroke="#333" stroke-width="0.700" stroke-dasharray="1.600 0.800"/>
<!-- 21 cube -->
<path d="M791.800,550.600 L800.600,547.400 L806.800,550 L806.800,560.400 L797.600,563.800 L791.800,560.400 Z" fill="#f4f4f4" stroke="#7a7a7a" stroke-width="0.800" stroke-linejoin="round"/>
<path d="M791.800,550.600 L797.600,553.400 L806.800,550 M797.600,553.400 V563.800" fill="none" stroke="#8a8a8a" stroke-width="0.700"/>
<path d="M792,550.900 L797.400,553.600 L797.400,563.400 L792,560.200 Z" fill="#d8d8d8"/>
<path d="M797.500,553.600 V563.500" stroke="#5b9cc8" stroke-width="0.900"/>
<!-- separators -->
<path d="M417.600,546 V565.500 M652.300,546 V565.500" stroke="#d0d0d0" stroke-width="0.800"/>
<path d="M260.500,546 V566 M293.600,546 V566 M327.800,546 V566" stroke="#f0f0f0" stroke-width="0.800"/>
<path d="M496.300,546 V566 M529.600,546 V566 M563.300,546 V566" stroke="#dedfe0" stroke-width="0.800"/>
<!-- heart chevron -->
<path d="M666.300,527.600 C667.500,526.300 669.600,527 671,529 C672.400,527 674.500,526.300 675.700,527.600 C676.600,528.600 676,529.800 675,530.800 L671,534.400 L667,530.800 C666,529.800 665.400,528.600 666.300,527.600 Z" fill="#f4f4f4" stroke="#b4b4b4" stroke-width="0.800"/>
<path d="M668.400,529.300 L671,531.800 L673.600,529.300" fill="none" stroke="#b4b4b4" stroke-width="0.800"/>
</svg>
<div class="tt" style="left:356px">Sketch</div>
<div class="tt" style="left:394px">Feature</div>
<div class="tt" style="left:434px">Assembly</div>
<div class="tt" style="left:478px">Design Guidance</div>
<div class="tt" style="left:554px">Tools</div>
<div class="tt" style="left:589px">Manage</div>
<div class="tt" style="left:635px">View</div>
</body>
</html>
